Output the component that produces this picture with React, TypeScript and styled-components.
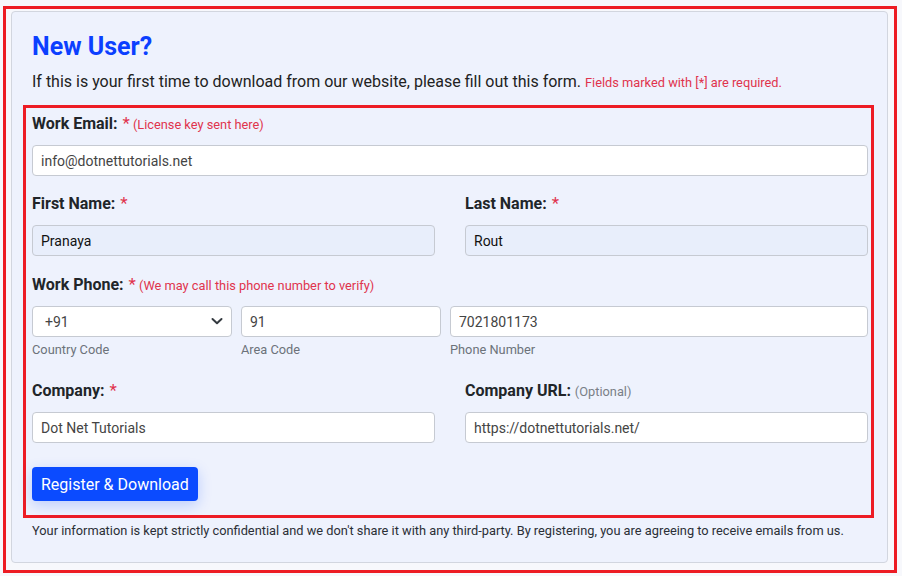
import React, {FC} from 'react';
import styled, {createGlobalStyle} from "styled-components";

const GlobalStyle = createGlobalStyle`
  html, body {
    margin: 0;
    padding: 0;
    background: #f7f8fc;
  }
  body {
    font-family: Roboto, "Liberation Sans", Arial, sans-serif;
    color: #212529;
  }
  * {
    box-sizing: border-box;
  }
`

export const Page = styled.div`
  width: 902px;
  height: 576px;
  padding: 6px 5px 2px 3px;
`
export const Frame = styled.div`
  border: 3px solid #ed1c24;
  padding: 2px 6px 6px 5px;
  height: 567px;
`
export const Card = styled.div`
  background: #eef2fd;
  border: 1px solid #d2d6df;
  border-radius: 4px;
  padding: 20px 13px 21px 11px;
`
export const Header = styled.div`
  padding-left: 9px;
`
export const Title = styled.h2`
  margin: 0;
  font-size: 25px;
  line-height: 29px;
  font-weight: 700;
  color: #0b3fff;
`
export const Lead = styled.p`
  margin: 9px 0 11px;
  font-size: 16px;
  line-height: 24px;
  color: #222;
`
export const Note = styled.span<{ $muted?: boolean }>`
  font-size: 12.8px;
  line-height: 1;
  font-weight: 400;
  color: ${p => p.$muted ? "#7a7f87" : "#e0344d"};
`
export const Highlight = styled.div`
  border: 3px solid #ed1c24;
  padding: 4px 3px 14px 6px;
`
export const Group = styled.div<{ $gap: number }>`
  margin-bottom: ${p => p.$gap}px;
`
export const Row = styled.div`
  display: grid;
  grid-template-columns: 1fr 1fr;
  column-gap: 30px;
`
export const PhoneRow = styled.div`
  display: grid;
  grid-template-columns: 200px 200px 1fr;
  column-gap: 9px;
`
export const Label = styled.div`
  font-size: 16px;
  line-height: 24px;
  font-weight: 700;
  color: #212529;
  margin-bottom: 9px;
`
export const Star = styled.span`
  color: #e0344d;
  font-weight: 400;
  font-size: 17px;
  line-height: 0;
  margin: 0 3px 0 1px;
`
export const Input = styled.input<{ $filled?: boolean }>`
  display: block;
  width: 100%;
  height: 31px;
  padding: 0 8px;
  border: 1px solid #c6cad2;
  border-radius: 4px;
  background: ${p => p.$filled ? "#e8eefb" : "#fff"};
  font-family: Roboto, "Liberation Sans", Arial, sans-serif;
  font-size: 14px;
  color: ${p => p.$filled ? "#111" : "#444"};
  outline: none;
`
export const SelectBox = styled.div`
  position: relative;
`
export const Select = styled.select`
  display: block;
  width: 100%;
  height: 31px;
  padding: 0 12px;
  border: 1px solid #c6cad2;
  border-radius: 4px;
  background: #fff;
  appearance: none;
  font-family: Roboto, "Liberation Sans", Arial, sans-serif;
  font-size: 14px;
  color: #444;
  outline: none;
`
export const Chevron = styled.svg`
  position: absolute;
  right: 9px;
  top: 10px;
  pointer-events: none;
`
export const Help = styled.div`
  margin-top: 3px;
  font-size: 12.8px;
  line-height: 20px;
  color: #6c727a;
`
export const Button = styled.button`
  display: block;
  margin-top: 24px;
  height: 34px;
  padding: 0 9px;
  border: none;
  border-radius: 4px;
  background: #0b4bff;
  color: #fff;
  font-family: Roboto, "Liberation Sans", Arial, sans-serif;
  font-size: 16px;
  box-shadow: 0 4px 14px rgba(11, 75, 255, 0.22);
`
export const Footer = styled.p`
  margin: 3px 0 0;
  padding-left: 9px;
  font-size: 12.8px;
  line-height: 20px;
  color: #2b2f36;
`

const App: FC = () => {
    return (
        <>
            <GlobalStyle/>
            <Page>
                <Frame>
                    <Card>
                        <Header>
                            <Title>New User?</Title>
                            <Lead>
                                If this is your first time to download from our website, please fill out this form.{" "}
                                <Note>Fields marked with [*] are required.</Note>
                            </Lead>
                        </Header>
                        <Highlight>
                            <Group $gap={16}>
                                <Label>Work Email: <Star>*</Star><Note>(License key sent here)</Note></Label>
                                <Input defaultValue="info@dotnettutorials.net"/>
                            </Group>
                            <Group $gap={17}>
                                <Row>
                                    <div>
                                        <Label>First Name: <Star>*</Star></Label>
                                        <Input $filled defaultValue="Pranaya"/>
                                    </div>
                                    <div>
                                        <Label>Last Name: <Star>*</Star></Label>
                                        <Input $filled defaultValue="Rout"/>
                                    </div>
                                </Row>
                            </Group>
                            <Group $gap={19}>
                                <Label>Work Phone: <Star>*</Star><Note>(We may call this phone number to verify)</Note></Label>
                                <PhoneRow>
                                    <div>
                                        <SelectBox>
                                            <Select defaultValue="+91">
                                                <option value="+91">+91</option>
                                                <option value="+1">+1</option>
                                            </Select>
                                            <Chevron width="12" height="10" viewBox="0 0 12 10">
                                                <path d="M1.5 3 L6 7.2 L10.5 3" fill="none" stroke="#343a40"
                                                      strokeWidth="2" strokeLinecap="round" strokeLinejoin="round"/>
                                            </Chevron>
                                        </SelectBox>
                                        <Help>Country Code</Help>
                                    </div>
                                    <div>
                                        <Input defaultValue="91"/>
                                        <Help>Area Code</Help>
                                    </div>
                                    <div>
                                        <Input defaultValue="7021801173"/>
                                        <Help>Phone Number</Help>
                                    </div>
                                </PhoneRow>
                            </Group>
                            <Row>
                                <div>
                                    <Label>Company: <Star>*</Star></Label>
                                    <Input defaultValue="Dot Net Tutorials"/>
                                </div>
                                <div>
                                    <Label>Company URL: <Note $muted>(Optional)</Note></Label>
                                    <Input defaultValue="https://dotnettutorials.net/"/>
                                </div>
                            </Row>
                            <Button>Register &amp; Download</Button>
                        </Highlight>
                        <Footer>
                            Your information is kept strictly confidential and we don't share it with any third-party. By
                            registering, you are agreeing to receive emails from us.
                        </Footer>
                    </Card>
                </Frame>
            </Page>
        </>
    );
};

export default App;
